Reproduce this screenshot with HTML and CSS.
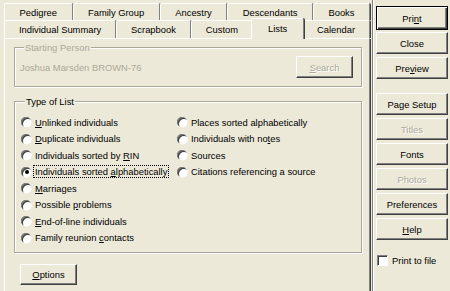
FILE: index.html
```html
<html>
    <head>
        <link rel="stylesheet" href="styles.css">
    </head>
    <body>
        <div class="dialog">
            <div class="main">
                <div class="tab-row">
                    <div class="tab">Pedigree</div>
                    <div class="tab">Family Group</div>
                    <div class="tab">Ancestry</div>
                    <div class="tab">Descendants</div>
                    <div class="tab">Books</div>
                </div>
                <div class="tab-row front">
                    <div class="tab">Individual Summary</div>
                    <div class="tab">Scrapbook</div>
                    <div class="tab">Custom</div>
                    <div class="tab selected">Lists</div>
                    <div class="tab">Calendar</div>
                </div>
                <div class="panel">
                    <fieldset class="group person">
                        <legend class="disabled-label">Starting Person</legend>
                        <div class="person-row">
                            <span class="person-name">Joshua Marsden BROWN-76</span>
                            <button class="btn search disabled"><u>S</u>earch</button>
                        </div>
                    </fieldset>
                    <fieldset class="group list-type">
                        <legend>Type of List</legend>
                        <div class="radio-grid">
                            <div class="radio-col">
                                <div class="radio"><span class="dot"></span><span><u>U</u>nlinked individuals</span></div>
                                <div class="radio"><span class="dot"></span><span><u>D</u>uplicate individuals</span></div>
                                <div class="radio"><span class="dot"></span><span>Individuals sorted by <u>R</u>IN</span></div>
                                <div class="radio"><span class="dot checked"></span><span class="focus">Individuals sorted <u>a</u>lphabetically</span></div>
                                <div class="radio"><span class="dot"></span><span><u>M</u>arriages</span></div>
                                <div class="radio"><span class="dot"></span><span>Possible <u>p</u>roblems</span></div>
                                <div class="radio"><span class="dot"></span><span><u>E</u>nd-of-line individuals</span></div>
                                <div class="radio"><span class="dot"></span><span>Family reunion <u>c</u>ontacts</span></div>
                            </div>
                            <div class="radio-col">
                                <div class="radio"><span class="dot"></span><span>Places sorted alphabetically</span></div>
                                <div class="radio"><span class="dot"></span><span>Individuals with no<u>t</u>es</span></div>
                                <div class="radio"><span class="dot"></span><span>Sources</span></div>
                                <div class="radio"><span class="dot"></span><span>Citations referencing a source</span></div>
                            </div>
                        </div>
                    </fieldset>
                    <button class="btn options"><u>O</u>ptions</button>
                </div>
            </div>
            <div class="side">
                <button class="btn default">Pri<u>n</u>t</button>
                <button class="btn">Close</button>
                <button class="btn">Pre<u>v</u>iew</button>
                <button class="btn gap">Page Setup</button>
                <button class="btn disabled">Titles</button>
                <button class="btn">Fonts</button>
                <button class="btn disabled">Photos</button>
                <button class="btn">Preferences</button>
                <button class="btn"><u>H</u>elp</button>
                <div class="check-row"><span class="check"></span><span>Print to file</span></div>
            </div>
        </div>
    </body>
</html>
```

FILE: styles.css
```css
body, html {
    margin: 0;
    height: 100%;
    overflow: hidden;
    background: #ece9d8;
    font-family: "Liberation Sans", Arial, sans-serif;
    font-size: 9.4px;
    color: #000;
}
.dialog {
    display: flex;
    height: 291px;
}
.main {
    width: 366px;
    margin-left: 4px;
    padding-top: 3px;
    display: flex;
    flex-direction: column;
}
.tab-row {
    display: flex;
    flex: none;
    height: 17px;
}
.tab-row.front {
    height: 18px;
}
.tab {
    flex: 1 1 auto;
    display: flex;
    align-items: center;
    justify-content: center;
    white-space: nowrap;
    border-top: 1px solid #fff;
    border-left: 1px solid #fff;
    border-right: 1px solid #808080;
    border-radius: 2px 2px 0 0;
    box-shadow: 1px 0 0 #404040;
}
.tab.selected {
    position: relative;
    z-index: 1;
    margin: -2px -2px -1px;
    padding: 0 2px 2px;
    background: #ece9d8;
}
.panel {
    height: 260px;
    flex: none;
    box-sizing: border-box;
    border: 1px solid;
    border-color: #fff #808080 #808080 #fff;
    box-shadow: 1px 1px 0 #404040;
    padding: 3px 7px 0 9px;
}
.group {
    margin: 0;
    min-width: 0;
    border: 1px solid #aca899;
    box-shadow: inset 1px 1px 0 #fff, 1px 1px 0 #fff;
}
.group legend {
    padding: 0 1px;
    margin-left: 4px;
    line-height: 11px;
    background: #ece9d8;
}
.disabled-label, .person-name {
    color: #aca899;
}
.person {
    padding: 3px 8px 8px 5px;
}
.person-row {
    display: flex;
    align-items: center;
    justify-content: space-between;
}
.list-type {
    margin-top: 9px;
    padding: 7px 6px 6px 6px;
}
.radio-grid {
    display: grid;
    grid-template-columns: 156px 1fr;
}
.radio {
    display: flex;
    align-items: center;
    gap: 4px;
    height: 16.5px;
    white-space: nowrap;
}
.dot {
    width: 10px;
    height: 10px;
    border-radius: 50%;
    background: #fff;
    box-shadow: inset 1px 1px 0 #808080, inset 2px 2px 0 #404040, 0.5px 0.5px 0 #fff;
    display: flex;
    align-items: center;
    justify-content: center;
}
.dot.checked::after {
    content: "";
    width: 4px;
    height: 4px;
    border-radius: 50%;
    background: #000;
    margin: 1px 0 0 1px;
}
.focus {
    outline: 1px dotted #000;
    outline-offset: 0;
    padding: 0 1px;
    margin-left: -1px;
}
.btn {
    box-sizing: border-box;
    font: inherit;
    color: #000;
    background: #ece9d8;
    padding: 0;
    height: 22px;
    border: 1px solid;
    border-color: #fff #404040 #404040 #fff;
    box-shadow: inset -1px -1px 0 #808080;
    border-radius: 0;
}
.btn.disabled {
    color: #aca899;
    text-shadow: 1px 1px 0 #fff;
}
.search {
    width: 57px;
}
.options {
    width: 57px;
    height: 21px;
    margin: 11px 0 0 6px;
}
.side {
    margin-left: 2px;
    border-left: 1px solid #808080;
    box-shadow: inset 1px 0 0 #fff;
    padding: 6px 0 0 3px;
    display: flex;
    flex-direction: column;
    gap: 3px;
}
.side .btn {
    width: 72px;
}
.side .btn.default {
    height: 24px;
    margin-bottom: -1px;
    border: 1px solid #000;
    box-shadow: inset 1px 1px 0 #fff, inset -1px -1px 0 #404040, inset -2px -2px 0 #808080;
}
.side .btn.gap {
    margin-top: 11px;
}
.check-row {
    display: flex;
    align-items: center;
    gap: 4px;
    margin: 12px 0 0 1px;
}
.check {
    width: 11px;
    height: 11px;
    box-sizing: border-box;
    background: #fff;
    border: 1px solid;
    border-color: #808080 #fff #fff #808080;
    box-shadow: inset 1px 1px 0 #404040;
}
```
